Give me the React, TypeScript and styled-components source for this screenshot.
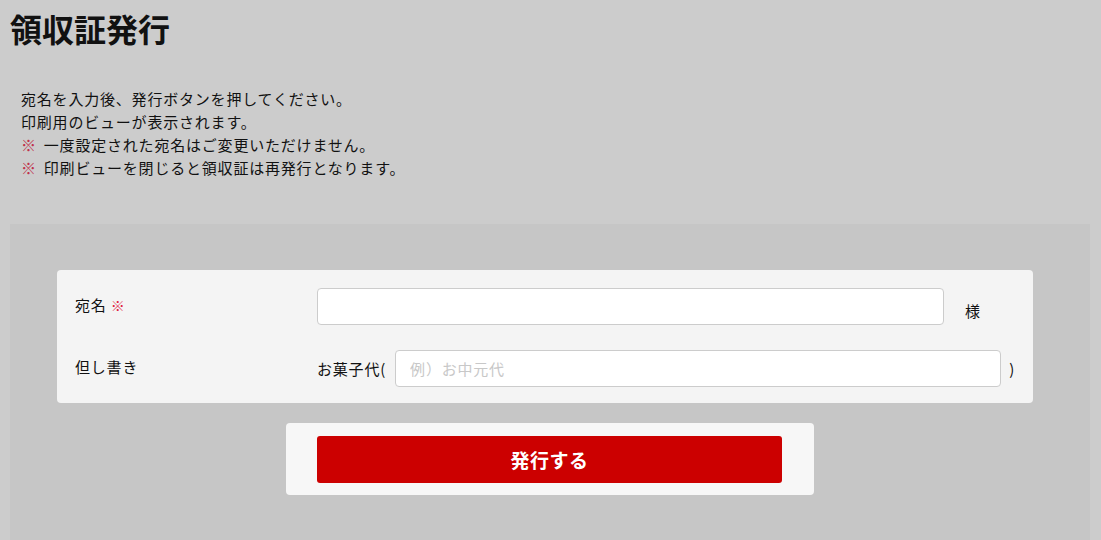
import React, { useState } from "react";
import styled, { createGlobalStyle } from "styled-components";

const GlobalStyle = createGlobalStyle`
  html, body {
    margin: 0;
    padding: 0;
    background: #cccccc;
  }
  body {
    font-family: "Noto Sans CJK JP", "Noto Sans", sans-serif;
    color: #111;
  }
`;

const Page = styled.div`
  padding: 0 11px 0 10px;
`;

const Title = styled.h1`
  margin: 0;
  padding-top: 6px;
  font-size: 32px;
  line-height: 44px;
  font-weight: 700;
`;

const Notes = styled.div`
  margin-top: 37px;
  padding-left: 11px;
  font-size: 15px;
  line-height: 23px;
  letter-spacing: 0.8px;
`;

const Mark = styled.span<{ $gap?: number; $tone?: string; $size?: number }>`
  color: ${(p) => p.$tone ?? "#c0304a"};
  margin-right: ${(p) => p.$gap ?? 0}px;
  font-size: ${(p) => (p.$size ? `${p.$size}px` : "inherit")};
`;

const Panel = styled.section`
  margin-top: 45px;
  background: #c6c6c6;
  padding: 46px 57px 60px 47px;
`;

const FormCard = styled.div`
  background: #f4f4f4;
  border-radius: 4px;
  padding: 18px 18px 16px;
  display: grid;
  grid-template-columns: 242px 1fr;
  row-gap: 25px;
  align-items: center;
`;

const Label = styled.div`
  font-size: 15px;
  line-height: 20px;
  letter-spacing: 0.8px;
  margin-top: -3px;
`;

const Field = styled.div`
  display: flex;
  align-items: center;
`;

const TextInput = styled.input`
  flex: 1;
  min-width: 0;
  height: 37px;
  box-sizing: border-box;
  border: 1px solid #cccccc;
  border-radius: 4px;
  background: #fff;
  padding: 0 14px;
  font-family: inherit;
  font-size: 15px;
  letter-spacing: 0.8px;
  color: #111;
  outline: none;

  &::placeholder {
    color: #c8c8c8;
  }
`;

const Affix = styled.span<{ $left?: number; $right?: number; $w?: number; $dy?: number }>`
  font-size: 15px;
  line-height: 20px;
  letter-spacing: 0.8px;
  padding-left: ${(p) => p.$left ?? 0}px;
  padding-right: ${(p) => p.$right ?? 0}px;
  width: ${(p) => (p.$w ? `${p.$w}px` : "auto")};
  box-sizing: border-box;
  position: relative;
  top: ${(p) => p.$dy ?? 0}px;
  flex-shrink: 0;
`;

const SubmitCard = styled.div`
  width: 528px;
  box-sizing: border-box;
  margin: 20px 0 0 calc(50% - 259px);
  background: #f7f7f7;
  border-radius: 4px;
  padding: 13px 32px 12px 31px;
`;

const SubmitButton = styled.button`
  display: block;
  width: 100%;
  height: 47px;
  border: none;
  border-radius: 3px;
  background: #cc0000;
  color: #fff;
  font-family: inherit;
  font-size: 19px;
  letter-spacing: 0.5px;
  font-weight: 700;
  cursor: pointer;
`;

export default function App() {
  const [name, setName] = useState("");
  const [memo, setMemo] = useState("");

  return (
    <Page>
      <GlobalStyle />
      <Title>領収証発行</Title>
      <Notes>
        宛名を入力後、発行ボタンを押してください。
        <br />
        印刷用のビューが表示されます。
        <br />
        <Mark $gap={7}>※</Mark>一度設定された宛名はご変更いただけません。
        <br />
        <Mark $gap={7}>※</Mark>印刷ビューを閉じると領収証は再発行となります。
      </Notes>
      <Panel>
        <FormCard>
          <Label>
            宛名 <Mark $tone="#e0203c" $size={14}>※</Mark>
          </Label>
          <Field>
            <TextInput value={name} onChange={(e) => setName(e.target.value)} />
            <Affix $left={21} $w={71} $dy={4}>
              様
            </Affix>
          </Field>
          <Label>但し書き</Label>
          <Field>
            <Affix $right={9}>お菓子代(</Affix>
            <TextInput
              placeholder="例）お中元代"
              value={memo}
              onChange={(e) => setMemo(e.target.value)}
            />
            <Affix $left={8}>)</Affix>
          </Field>
        </FormCard>
        <SubmitCard>
          <SubmitButton type="button">発行する</SubmitButton>
        </SubmitCard>
      </Panel>
    </Page>
  );
}
